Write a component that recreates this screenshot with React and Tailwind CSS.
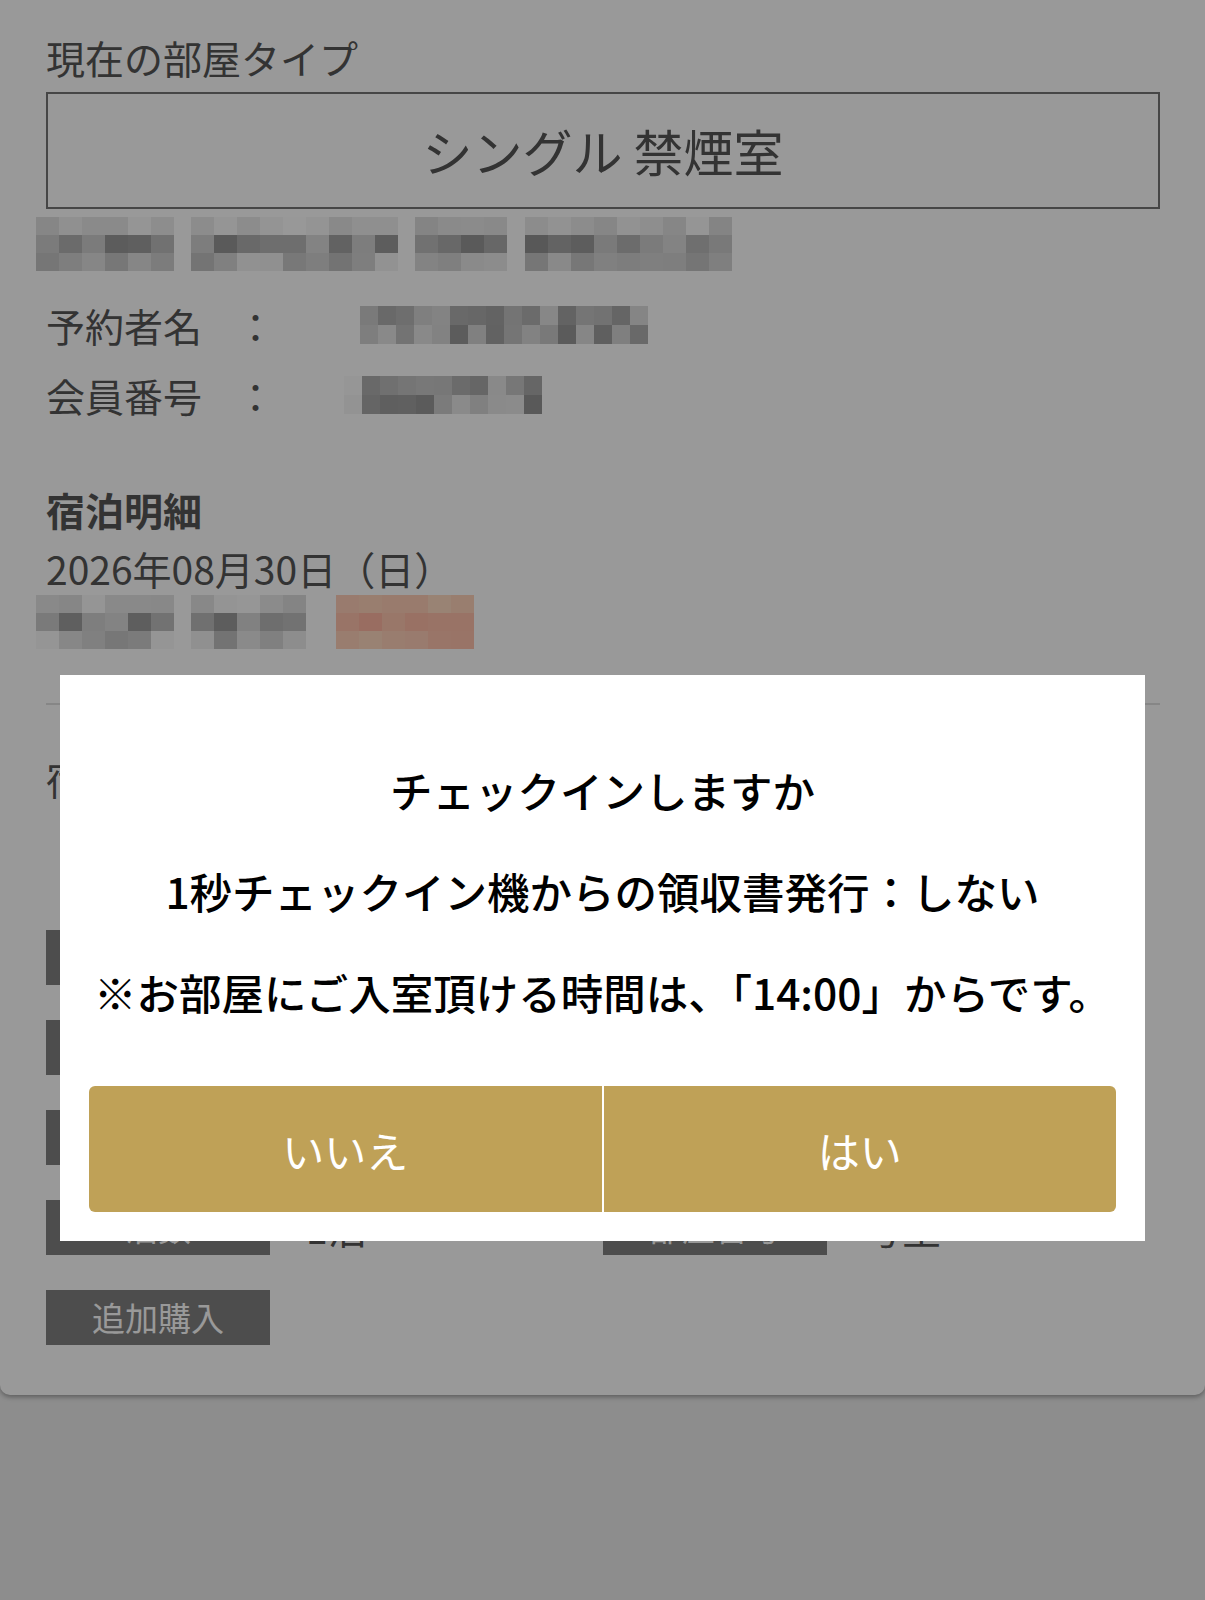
import React from "react";

const FONT = { fontFamily: '"Noto Sans CJK JP", "Noto Sans", sans-serif' };

// pixelated (mosaic) blur used for hidden personal data
const rnd = (s) => {
  const x = Math.sin(s * 127.1 + 311.7) * 43758.5453;
  return x - Math.floor(x);
};
const under = (d) => Math.min(255, Math.round(d / 0.6));

const RANGES = {
  3: [
    [132, 152],
    [88, 135],
    [115, 150],
  ],
  2: [
    [95, 140],
    [88, 140],
  ],
};

function cellColor(tone, row, rows, seed) {
  const [lo, hi] = RANGES[rows][row];
  const t = rnd(seed);
  if (tone === "orange") {
    const k = row === 1 && rows === 3 ? 0.78 + t * 0.15 : 0.88 + t * 0.12;
    return `rgb(255, ${Math.round(220 * k)}, ${Math.round(195 * k)})`;
  }
  if (tone === "faint") {
    const g = under(140 + t * 12);
    return `rgb(${g}, ${g}, ${g})`;
  }
  const g = under(lo + t * (hi - lo));
  return `rgb(${g}, ${g}, ${g})`;
}

function Mosaic({ segments, rows, cellW, cellH, seed, className = "" }) {
  let k = seed * 100;
  return (
    <div className={`flex items-start ${className}`}>
      {segments.map((seg, si) => (
        <div key={si} className="flex" style={{ marginLeft: seg.gap || 0 }}>
          {Array.from({ length: seg.n }).map((_, ci) => (
            <div key={ci} className="flex flex-col">
              {Array.from({ length: rows }).map((_, ri) => {
                k += 1;
                return (
                  <div
                    key={ri}
                    style={{
                      width: cellW,
                      height: cellH,
                      background: cellColor(seg.tone, ri, rows, k),
                    }}
                  />
                );
              })}
            </div>
          ))}
        </div>
      ))}
    </div>
  );
}

function InfoRow({ label, children }) {
  return (
    <div className="flex items-center h-[50px] text-[39px] text-[#555]">
      <span className="w-[190px] whitespace-nowrap">{label}</span>
      <span className="w-[30px] text-center">：</span>
      {children}
    </div>
  );
}

function Field({ label, value }) {
  return (
    <div className="flex items-center h-[55px]">
      <div className="w-[224px] h-[55px] flex items-center justify-center bg-[#808080] text-white text-[33px] whitespace-nowrap">
        {label}
      </div>
      {value && <span className="ml-[36px] text-[39px] text-[#555]">{value}</span>}
    </div>
  );
}

export default function App() {
  return (
    <div className="relative w-full min-h-[1600px] bg-[#ebebeb]" style={FONT}>
      {/* page card */}
      <div className="bg-white rounded-b-[10px] shadow-[0_2px_5px_rgba(0,0,0,0.35)] pl-[46px] pr-[45px] pt-[28px] pb-[50px]">
        <div className="h-[58px] flex items-center text-[39px] text-[#555]">現在の部屋タイプ</div>
        <div className="mt-[6px] h-[117px] border-2 border-[#767676] flex items-center justify-center text-[50px] text-[#555]">
          シングル 禁煙室
        </div>
        <Mosaic
          className="mt-[8px] -ml-[10px]"
          rows={3}
          cellW={23}
          cellH={18}
          seed={1}
          segments={[{ n: 6 }, { n: 9, gap: 17 }, { n: 4, gap: 17 }, { n: 9, gap: 18 }]}
        />

        <div className="mt-[29px]">
          <InfoRow label="予約者名">
            <Mosaic className="ml-[94px]" rows={2} cellW={18} cellH={19} seed={2} segments={[{ n: 16 }]} />
          </InfoRow>
        </div>
        <div className="mt-[20px]">
          <InfoRow label="会員番号">
            <Mosaic
              className="ml-[78px]"
              rows={2}
              cellW={18}
              cellH={19}
              seed={3}
              segments={[{ n: 1, tone: "faint" }, { n: 10 }]}
            />
          </InfoRow>
        </div>

        <div className="mt-[64px] h-[50px] flex items-center text-[39px] font-bold text-[#555]">宿泊明細</div>
        <div className="mt-[9px] h-[50px] flex items-center text-[39px] text-[#555]">2026年08月30日（日）</div>
        <Mosaic
          className="mt-[2px] -ml-[10px]"
          rows={3}
          cellW={23}
          cellH={18}
          seed={4}
          segments={[{ n: 6 }, { n: 5, gap: 17 }, { n: 6, gap: 30, tone: "orange" }]}
        />

        <div className="mt-[54px] h-[2px] bg-[#e0e0e0]" />

        <div className="mt-[48px] h-[50px] flex items-center text-[39px] text-[#555]">宿泊者情報</div>

        <div className="mt-[127px] grid grid-cols-2 gap-y-[35px]">
          <Field label="チェックイン" />
          <Field label="チェックアウト" />
          <Field label="大人" />
          <Field label="子供" />
          <Field label="料金" />
          <Field label="支払方法" />
          <Field label="泊数" value="1泊" />
          <Field label="部屋番号" value="号室" />
          <Field label="追加購入" />
        </div>
      </div>

      {/* dialog overlay */}
      <div className="fixed inset-0 bg-black/40">
        <div className="ml-[60px] mt-[675px] w-[1085px] bg-white px-[29px] pt-[85px] pb-[29px]">
          <div className="flex flex-col items-center text-[42.5px] font-medium text-black whitespace-nowrap">
            <div className="h-[60px] flex items-center">チェックインしますか</div>
            <div className="mt-[41px] h-[60px] flex items-center">1秒チェックイン機からの領収書発行：しない</div>
            <div className="mt-[41px] h-[60px] flex items-center">※お部屋にご入室頂ける時間は、「14:00」からです。</div>
          </div>
          <div className="mt-[64px] flex gap-[2px] h-[126px]">
            <button className="flex-1 rounded-l-[6px] bg-[#bfa157] text-white text-[42px]">いいえ</button>
            <button className="flex-1 rounded-r-[6px] bg-[#bfa157] text-white text-[42px]">はい</button>
          </div>
        </div>
      </div>
    </div>
  );
}
